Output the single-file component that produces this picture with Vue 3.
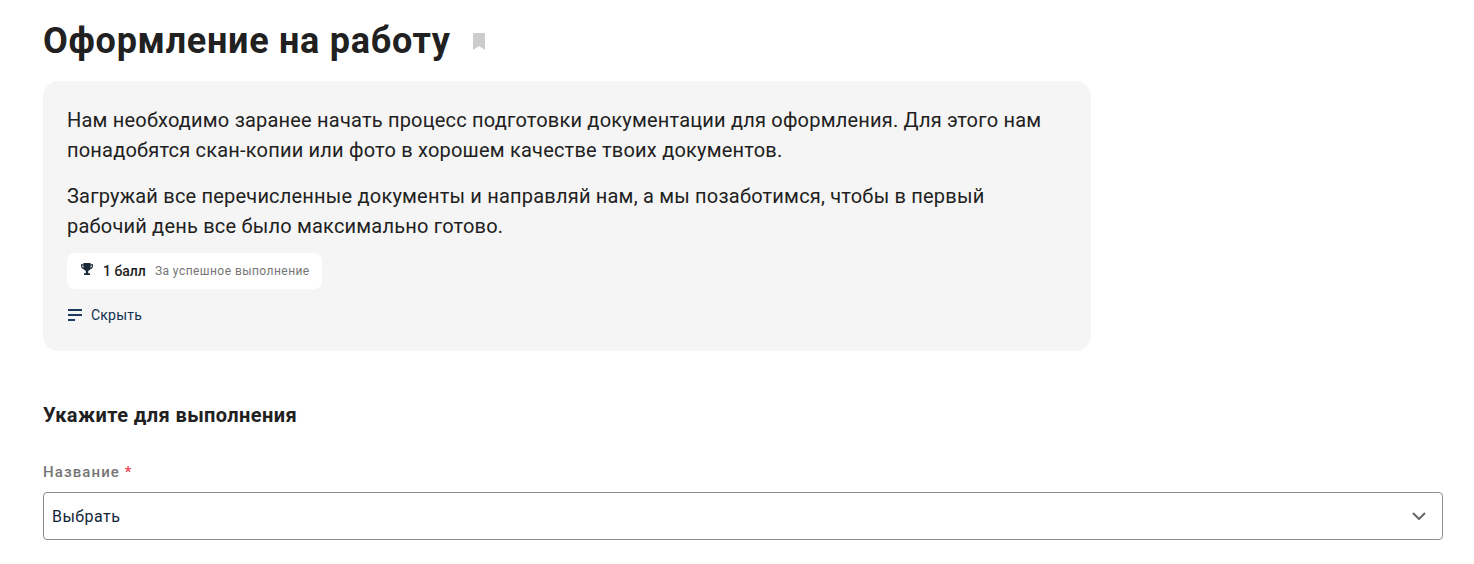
<script setup>
</script>

<template>
  <div class="page">
    <div class="title-row">
      <h1 class="title">Оформление на работу</h1>
      <svg class="bookmark" width="12" height="17" viewBox="0 0 12 17"><path d="M0 0h12v17l-6-4-6 4z" fill="#cccccc"/></svg>
    </div>
    <div class="card">
      <p class="para">Нам необходимо заранее начать процесс подготовки документации для оформления. Для этого нам понадобятся скан-копии или фото в хорошем качестве твоих документов.</p>
      <p class="para second">Загружай все перечисленные документы и направляй нам, а мы позаботимся, чтобы в первый рабочий день все было максимально готово.</p>
      <div class="score">
        <svg class="trophy" width="12" height="12" viewBox="2 2 20 20"><path d="M6 2h12v2h4v3c0 3-2 5-4.500 5.300-.8 1.500-2.100 2.500-3.500 2.900V19h3v3H7v-3h3v-3.800c-1.400-.4-2.700-1.400-3.500-2.900C4 12 2 10 2 7V4h4zm0 4H4v1c0 1.500.8 2.700 2 3.100zm12 0v4.100c1.200-.4 2-1.600 2-3.100V6z" fill="#1c2b3a"/></svg>
        <span class="points">1 балл</span>
        <span class="hint">За успешное выполнение</span>
      </div>
      <div class="hide">
        <svg width="16" height="12" viewBox="0 0 16 12"><path d="M1 1h14M1 6h14M1 11h7" stroke="#1d3a5c" stroke-width="1.800" fill="none"/></svg>
        <span>Скрыть</span>
      </div>
    </div>
    <h2 class="subtitle">Укажите для выполнения</h2>
    <div class="label">Название <span class="star">*</span></div>
    <div class="select">
      <span>Выбрать</span>
      <svg width="14" height="8" viewBox="0 0 14 8"><path d="M1 1l6 6 6-6" stroke="#666" stroke-width="2" fill="none"/></svg>
    </div>
  </div>
</template>

<style>
html, body { background: #fff; }
</style>

<style scoped>
.page {
  box-sizing: border-box;
  width: 1474px;
  height: 564px;
  overflow: hidden;
  padding: 17px 31px 0 43px;
  font-family: Roboto, "Noto Sans", sans-serif;
  color: #212121;
}
.title-row { display: flex; align-items: center; height: 48px; }
.title {
  margin: 0;
  font-size: 36px;
  line-height: 48px;
  font-weight: 700;
  letter-spacing: 0.72px;
}
.bookmark { margin-left: 22px; }
.card {
  box-sizing: border-box;
  width: 1048px;
  height: 270px;
  margin-top: 16px;
  padding: 24px;
  background: #f5f5f5;
  border-radius: 16px;
}
.para {
  margin: 0;
  font-size: 20px;
  line-height: 30px;
  letter-spacing: 0.2px;
}
.second { margin-top: 16px; }
.score {
  display: inline-flex;
  align-items: center;
  height: 36px;
  margin-top: 12px;
  padding: 0 12px 0 14px;
  background: #fff;
  border-radius: 8px;
}
.trophy { margin-top: -4px; }
.points { margin-left: 10px; font-size: 14px; font-weight: 500; }
.hint { margin-left: 9px; font-size: 12px; letter-spacing: 0.45px; color: #757575; }
.hide {
  display: flex;
  align-items: center;
  gap: 8px;
  margin-top: 18px;
  font-size: 14px;
  letter-spacing: 0.2px;
  color: #12304f;
}
.subtitle {
  margin: 50px 0 0;
  font-size: 20px;
  line-height: 28px;
  font-weight: 700;
  letter-spacing: 0.4px;
}
.label {
  margin-top: 33px;
  font-size: 15px;
  line-height: 20px;
  font-weight: 500;
  letter-spacing: 1.1px;
  color: #757575;
}
.star { color: #f44050; }
.select {
  box-sizing: border-box;
  display: flex;
  align-items: center;
  justify-content: space-between;
  height: 48px;
  margin-top: 10px;
  padding: 0 16px 0 8px;
  border: 1px solid #8c8c8c;
  border-radius: 4px;
  font-size: 16px;
  letter-spacing: 0.48px;
  color: #12263a;
}
</style>
